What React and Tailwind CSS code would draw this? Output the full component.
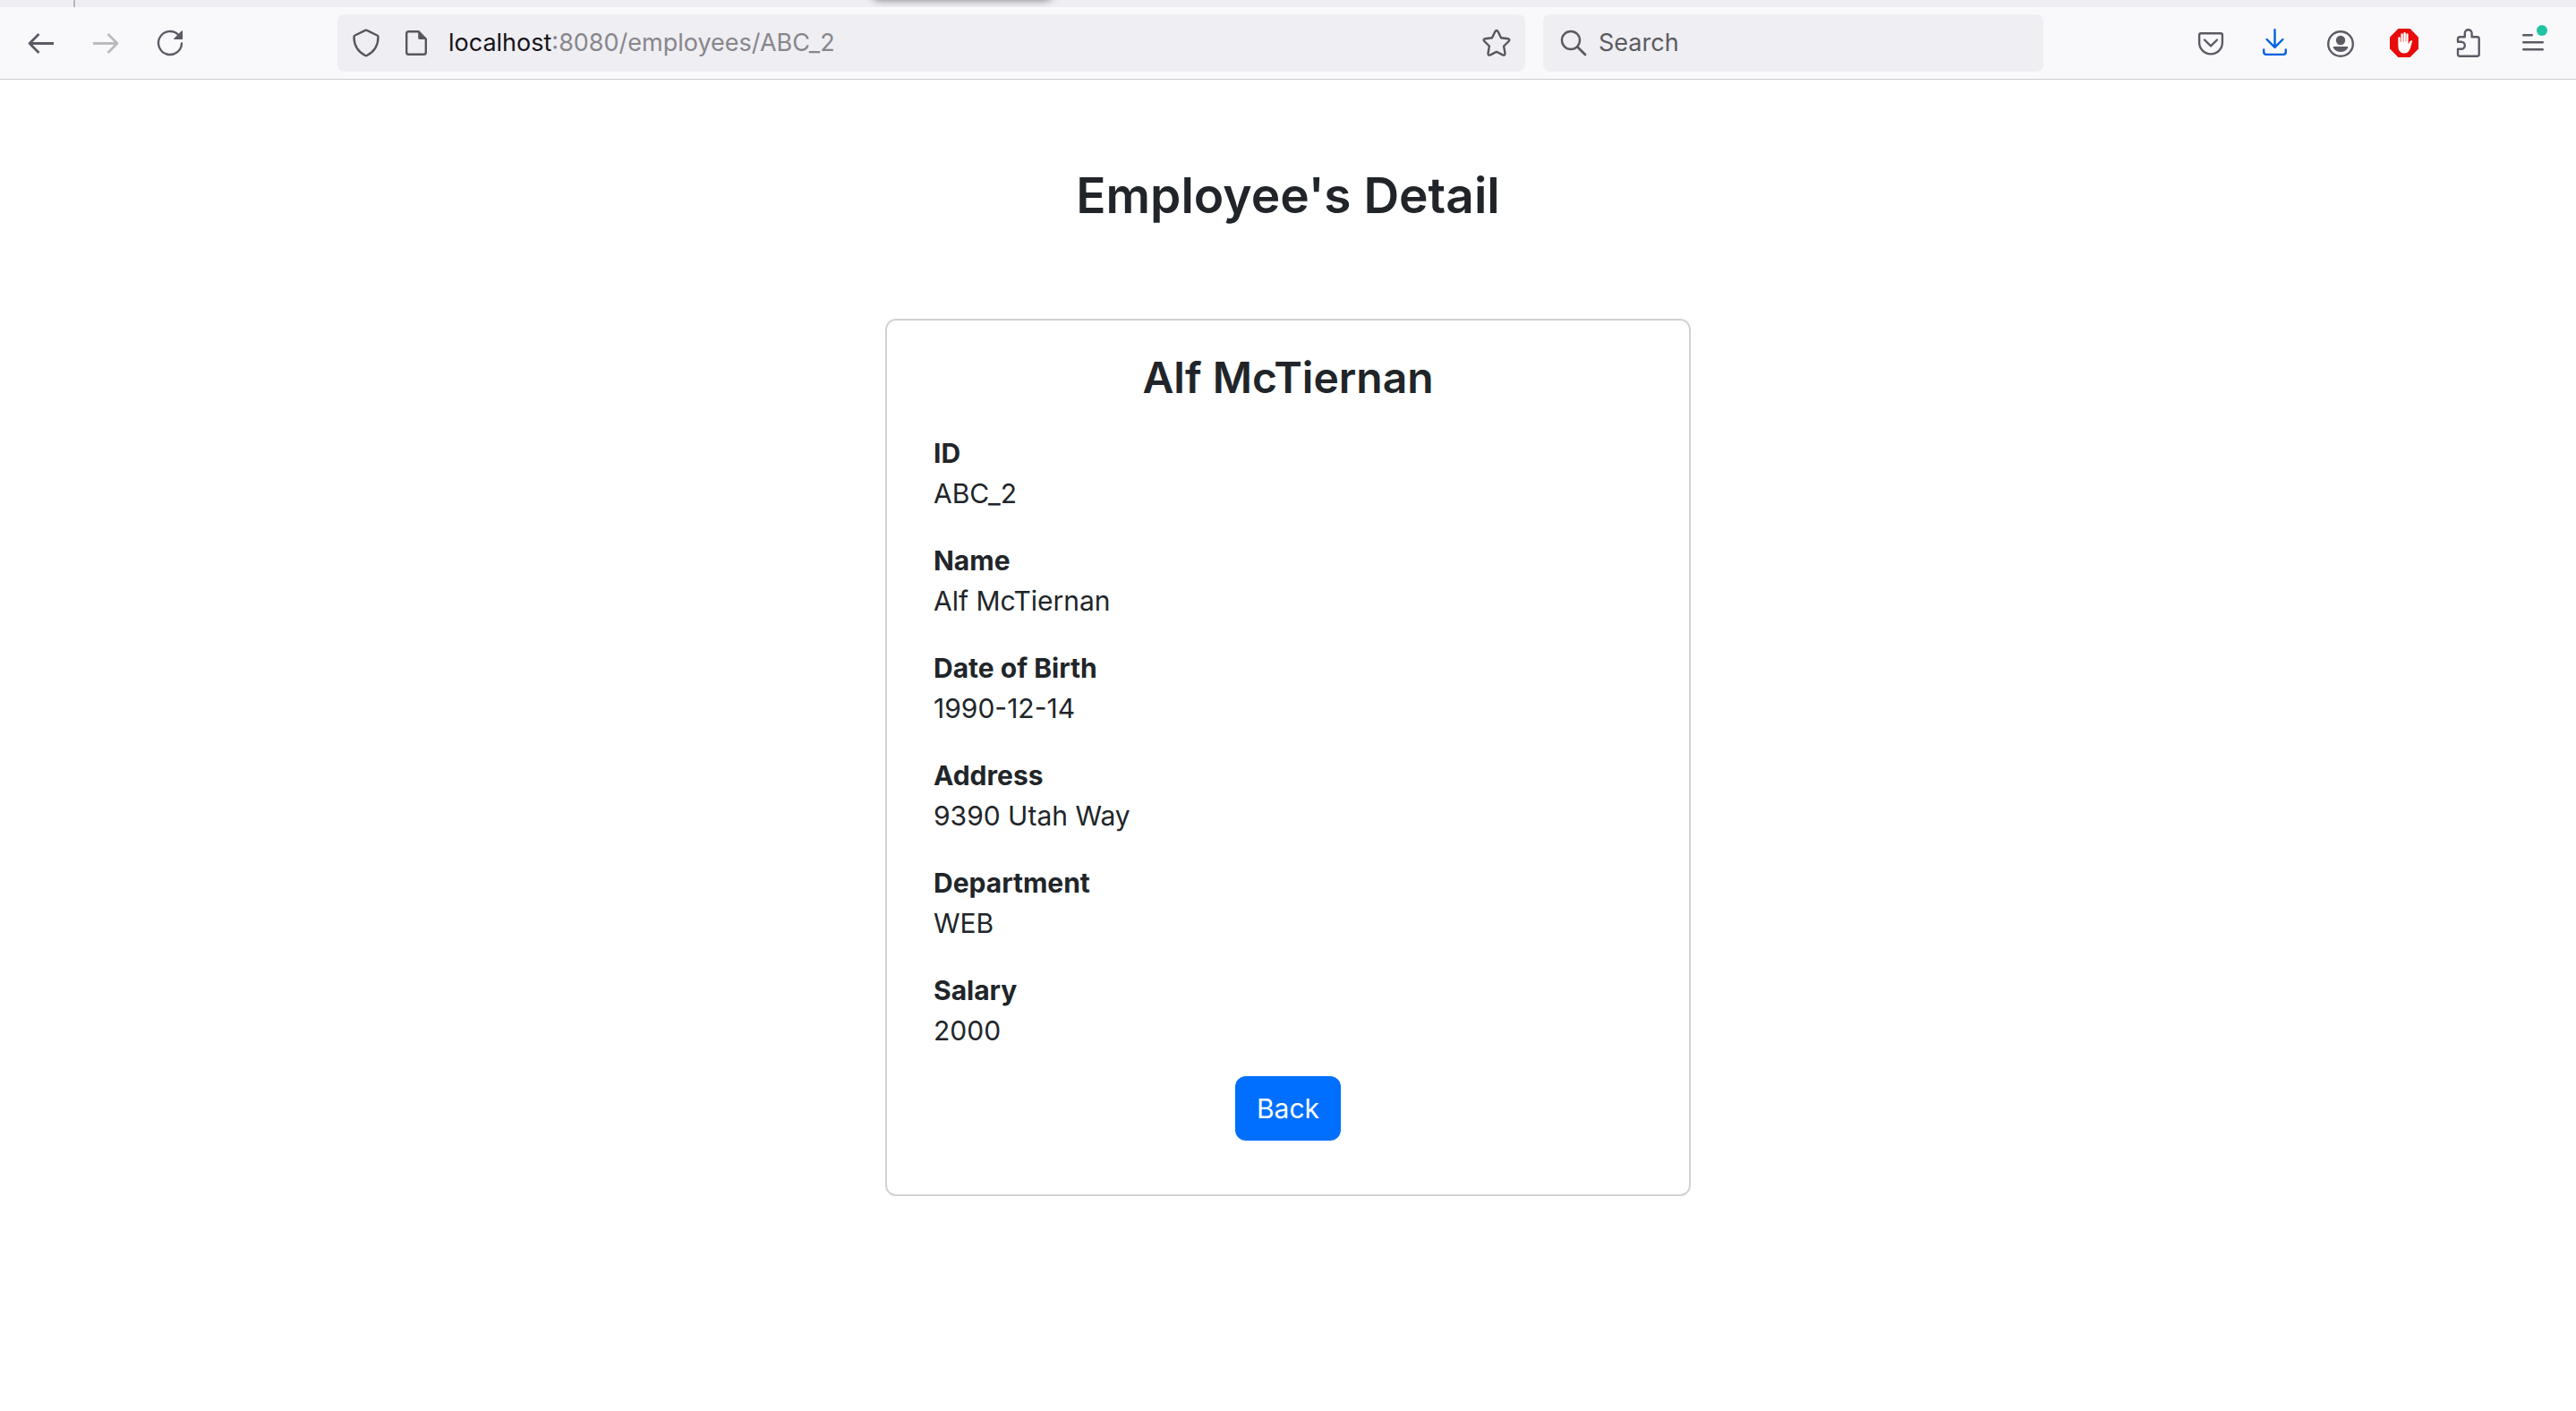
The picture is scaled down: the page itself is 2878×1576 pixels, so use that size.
import React from "react";

const employee = [
  ["ID", "ABC_2"],
  ["Name", "Alf McTiernan"],
  ["Date of Birth", "1990-12-14"],
  ["Address", "9390 Utah Way"],
  ["Department", "WEB"],
  ["Salary", "2000"],
];

function Icon({ children }) {
  return (
    <svg
      viewBox="0 0 32 32"
      className="size-8 shrink-0 overflow-visible"
      fill="none"
      stroke="currentColor"
      strokeWidth="2.4"
      strokeLinecap="round"
      strokeLinejoin="round"
      aria-hidden="true"
    >
      {children}
    </svg>
  );
}

function ToolButton({ label, disabled, className = "text-[#5b5b66]", children }) {
  return (
    <button
      type="button"
      aria-label={label}
      disabled={disabled}
      className={`flex size-16 shrink-0 items-center justify-center rounded-lg ${className}`}
    >
      <Icon>{children}</Icon>
    </button>
  );
}

function TabStrip() {
  return (
    <div className="relative h-2 overflow-hidden bg-[#efeef3]">
      <div className="ml-[82px] h-2 w-[2px] bg-[#b9b9bd]" />
      <div className="absolute -top-4 left-[974px] h-4 w-[202px] rounded-lg bg-white shadow-[0_0_8px_rgba(0,0,0,0.5)]" />
    </div>
  );
}

function Toolbar() {
  return (
    <nav
      aria-label="Browser toolbar"
      className="flex h-[81px] items-center border-b border-[#cccccc] bg-[#f9f9fb] pr-4 pl-[14px]"
    >
      <div className="flex gap-2">
        <ToolButton label="Back">
          <path d="M3 16.5H30M13.5 6L3 16.5L13.5 27" strokeWidth="2.8" strokeLinecap="butt" />
        </ToolButton>
        <ToolButton label="Forward" disabled className="text-[#bbbbbf]">
          <path d="M2 16.5H29M18.5 6L29 16.5L18.5 27" strokeWidth="2.8" strokeLinecap="butt" />
        </ToolButton>
        <ToolButton label="Reload">
          <path d="M29 16.5A13 13 0 1 1 25 6.6" />
          <path d="M30 2.6V12H20.6Q19.8 11.6 20.3 10.9L28.8 2.4Q29.6 1.8 30 2.6Z" fill="currentColor" stroke="none" />
        </ToolButton>
      </div>
      <div className="min-w-0 flex-[155]" />
      <div className="flex h-16 min-w-0 flex-[1295] items-center rounded-lg bg-[#efeef3] px-4 text-[#57575b]">
        <Icon>
          <path d="M15.1 1.9Q16 1.4 16.9 1.9L28.4 7.5Q29.5 8 29.5 9.2C29.5 19 25.5 25.5 17 30Q16 30.5 15 30C6.500 25.500 2.500 19 2.500 9.200Q2.500 8 3.600 7.500Z" />
        </Icon>
        <div className="w-6 shrink-0" />
        <Icon>
          <path d="M7.500 3.200H18.500L26.800 11.500V26.500Q26.800 28.800 24.500 28.800H7.500Q5.200 28.800 5.200 26.500V5.500Q5.200 3.200 7.500 3.200Z" />
          <path d="M18.200 2V10.200Q18.200 12 20 12H28Z" fill="currentColor" stroke="none" />
        </Icon>
        <label className="ml-5 flex min-w-0 flex-1 items-center text-[27px] leading-10">
          <span className="text-[#15141a]">localhost</span>
          <input
            aria-label="Address"
            defaultValue=":8080/employees/ABC_2"
            className="min-w-0 flex-1 bg-transparent text-[#87868b] outline-none"
          />
        </label>
        <button type="button" aria-label="Bookmark this page">
          <Icon>
            <path d="M14.400 3.200Q16 0.900 17.600 3.200L21 10.300L28.600 11.200Q31.400 11.900 29.700 14L24.100 19.500L25.500 27.600Q25.500 30.400 22.900 29.400L16 25.700L9.100 29.400Q6.500 30.400 6.500 27.600L7.900 19.500L2.300 14Q0.600 11.900 3.400 11.200L11 10.300Z" />
          </Icon>
        </button>
      </div>
      <label className="ml-5 flex h-16 min-w-0 flex-[523] items-center gap-3 rounded-lg bg-[#efeef3] px-[18px] text-[27px] leading-10 text-[#5b5b5f]">
        <Icon>
          <circle cx="13" cy="13" r="10" />
          <path d="M20.500 20.500L29 29" strokeWidth="2.8" />
        </Icon>
        <input
          type="text"
          aria-label="Search"
          placeholder="Search"
          className="min-w-0 flex-1 bg-transparent outline-none placeholder:text-[#5b5b5f]"
        />
      </label>
      <div className="min-w-0 flex-[155]" />
      <div className="flex gap-2">
        <ToolButton label="Save to Pocket">
          <path d="M5 5.300H27Q28.900 5.300 28.900 7.200V15.500A12.900 12.900 0 0 1 3.100 15.500V7.200Q3.100 5.300 5 5.300Z" />
          <path d="M9 12.500L16 19.300L23 12.500" />
        </ToolButton>
        <ToolButton label="Downloads" className="text-[#0062e0]">
          <path d="M15.500 1.300V20.500M6.600 12L15.500 20.900L24.400 12M3.200 23.500V26Q3.200 28.900 6 28.900H25Q27.800 28.900 27.800 26V23.500" />
        </ToolButton>
        <ToolButton label="Account">
          <circle cx="17" cy="17" r="13.800" />
          <circle cx="17" cy="13" r="5.200" fill="currentColor" stroke="none" />
          <path d="M9.400 20H24.600Q26 20.300 25 21.700Q22 26 17 26Q12 26 9 21.700Q8 20.300 9.400 20Z" fill="currentColor" stroke="none" />
        </ToolButton>
        <ToolButton label="Ad blocker">
          <path d="M9.400 0H22.600L32 9.400V22.600L22.600 32H9.400L0 22.600V9.400Z" fill="#e80c0c" stroke="none" />
          <path
            d="M9.300 19V10.400Q9.300 9.200 10.500 9.200T11.700 10.400V15H12.400V6.400Q12.400 5.200 13.600 5.200T14.800 6.400V14.500H15.400V5.200Q15.400 4 16.600 4T17.800 5.200V14.500H18.300V6.400Q18.300 5.200 19.400 5.200T20.600 6.400V17.500L22.200 14.400Q23.300 12.800 25.200 13.400L23 21.500Q21.300 27.600 16 27.600Q9.300 27.600 9.300 19Z"
            fill="white"
            stroke="none"
          />
        </ToolButton>
        <ToolButton label="Extensions">
          <path d="M6.200 9.200H11.800V5.200A3.900 3.900 0 0 1 19.600 5.200V9.200H25.500Q27.700 9.200 27.700 11.400V28.600Q27.700 30.800 25.500 30.800H6.200Q4 30.800 4 28.600V22.800H7.800A4 4 0 0 0 7.800 14.800H4V11.400Q4 9.200 6.200 9.200" />
        </ToolButton>
        <ToolButton label="Menu">
          <path d="M5.200 7.200H14.800M5.200 15.200H26.800M5.200 23.200H26.800" />
          <circle cx="26" cy="2" r="6" fill="#20c3a2" stroke="none" />
        </ToolButton>
      </div>
    </nav>
  );
}

export default function App() {
  return (
    <div className="min-h-screen bg-white font-[Inter,'Liberation_Sans',sans-serif] text-[#212529]">
      <TabStrip />
      <Toolbar />
      <main className="flex flex-col items-center px-4 pt-[93px]">
        <h1 className="text-[55px] leading-[72px] font-semibold">Employee's Detail</h1>
        <section className="mt-[102px] flex w-full max-w-[900px] flex-col items-center rounded-xl border-2 border-[#d2d2d2] px-[52px] pt-8 pb-[60px]">
          <h2 className="text-[48px] leading-[64px] font-semibold">Alf McTiernan</h2>
          <dl className="mt-[30px] flex w-full flex-col gap-[30px] text-[30px] leading-[45px]">
            {employee.map(([label, value]) => (
              <div key={label}>
                <dt className="font-bold">{label}</dt>
                <dd>{value}</dd>
              </div>
            ))}
          </dl>
          <button
            type="button"
            className="mt-7 h-[72px] rounded-xl bg-[#006fff] px-6 text-[30px] leading-[45px] text-white"
          >
            Back
          </button>
        </section>
      </main>
    </div>
  );
}
